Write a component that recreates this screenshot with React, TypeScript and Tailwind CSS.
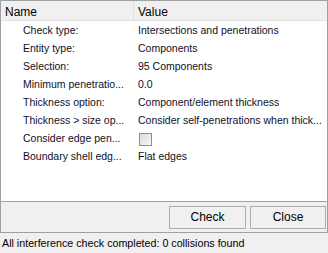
import React from 'react';

const rows: { name: string; value?: string; checkbox?: boolean }[] = [
  { name: 'Check type:', value: 'Intersections and penetrations' },
  { name: 'Entity type:', value: 'Components' },
  { name: 'Selection:', value: '95 Components' },
  { name: 'Minimum penetratio...', value: '0.0' },
  { name: 'Thickness option:', value: 'Component/element thickness' },
  { name: 'Thickness > size op...', value: 'Consider self-penetrations when thick...' },
  { name: 'Consider edge pen...', checkbox: true },
  { name: 'Boundary shell edg...', value: 'Flat edges' },
];

export default function App() {
  return (
    <div className="w-[328px] h-[253px] bg-[#f0f0f0] flex flex-col text-[10.5px] text-[#101028] font-['Liberation_Sans',Arial,sans-serif] overflow-hidden">
      <div className="h-[233px] flex flex-col border border-[#a0a0a0]">
        {/* header */}
        <div className="h-[20px] flex items-end bg-[#f0f0f0] border-b border-[#e0e0e0] text-black text-[12px]">
          <div className="w-[133px] h-full flex items-center pl-[4px] pt-[3px] border-r border-[#e0e0e0]">Name</div>
          <div className="flex-1 h-full flex items-center pl-[4px] pt-[3px]">Value</div>
        </div>
        {/* property list */}
        <div className="flex-1 bg-white pt-[1px] flex flex-col">
          {rows.map((r) => (
            <div key={r.name} className="h-[18px] flex items-center">
              <div className="w-[137px] pl-[22px] whitespace-nowrap overflow-hidden">{r.name}</div>
              <div className="flex-1 whitespace-nowrap">
                {r.checkbox ? (
                  <div className="w-[13px] h-[13px] ml-[1px] border border-[#8e8f8f] bg-gradient-to-br from-[#dcdcdc] to-[#f6f6f6]" />
                ) : (
                  r.value
                )}
              </div>
            </div>
          ))}
        </div>
        {/* buttons */}
        <div className="h-[31px] border-t border-[#a0a0a0] bg-[#f0f0f0] flex justify-end items-center gap-[4px] pr-[1px]">
          <button className="w-[77px] h-[23px] border border-[#adadad] bg-[#f0f0f0] text-[12px] text-black">Check</button>
          <button className="w-[76px] h-[23px] border border-[#adadad] bg-[#f0f0f0] text-[12px] text-black">Close</button>
        </div>
      </div>
      {/* status bar */}
      <div className="flex-1 flex items-center pl-[2px] text-[10.7px] text-black whitespace-nowrap">
        All interference check completed: 0 collisions found
      </div>
    </div>
  );
}
